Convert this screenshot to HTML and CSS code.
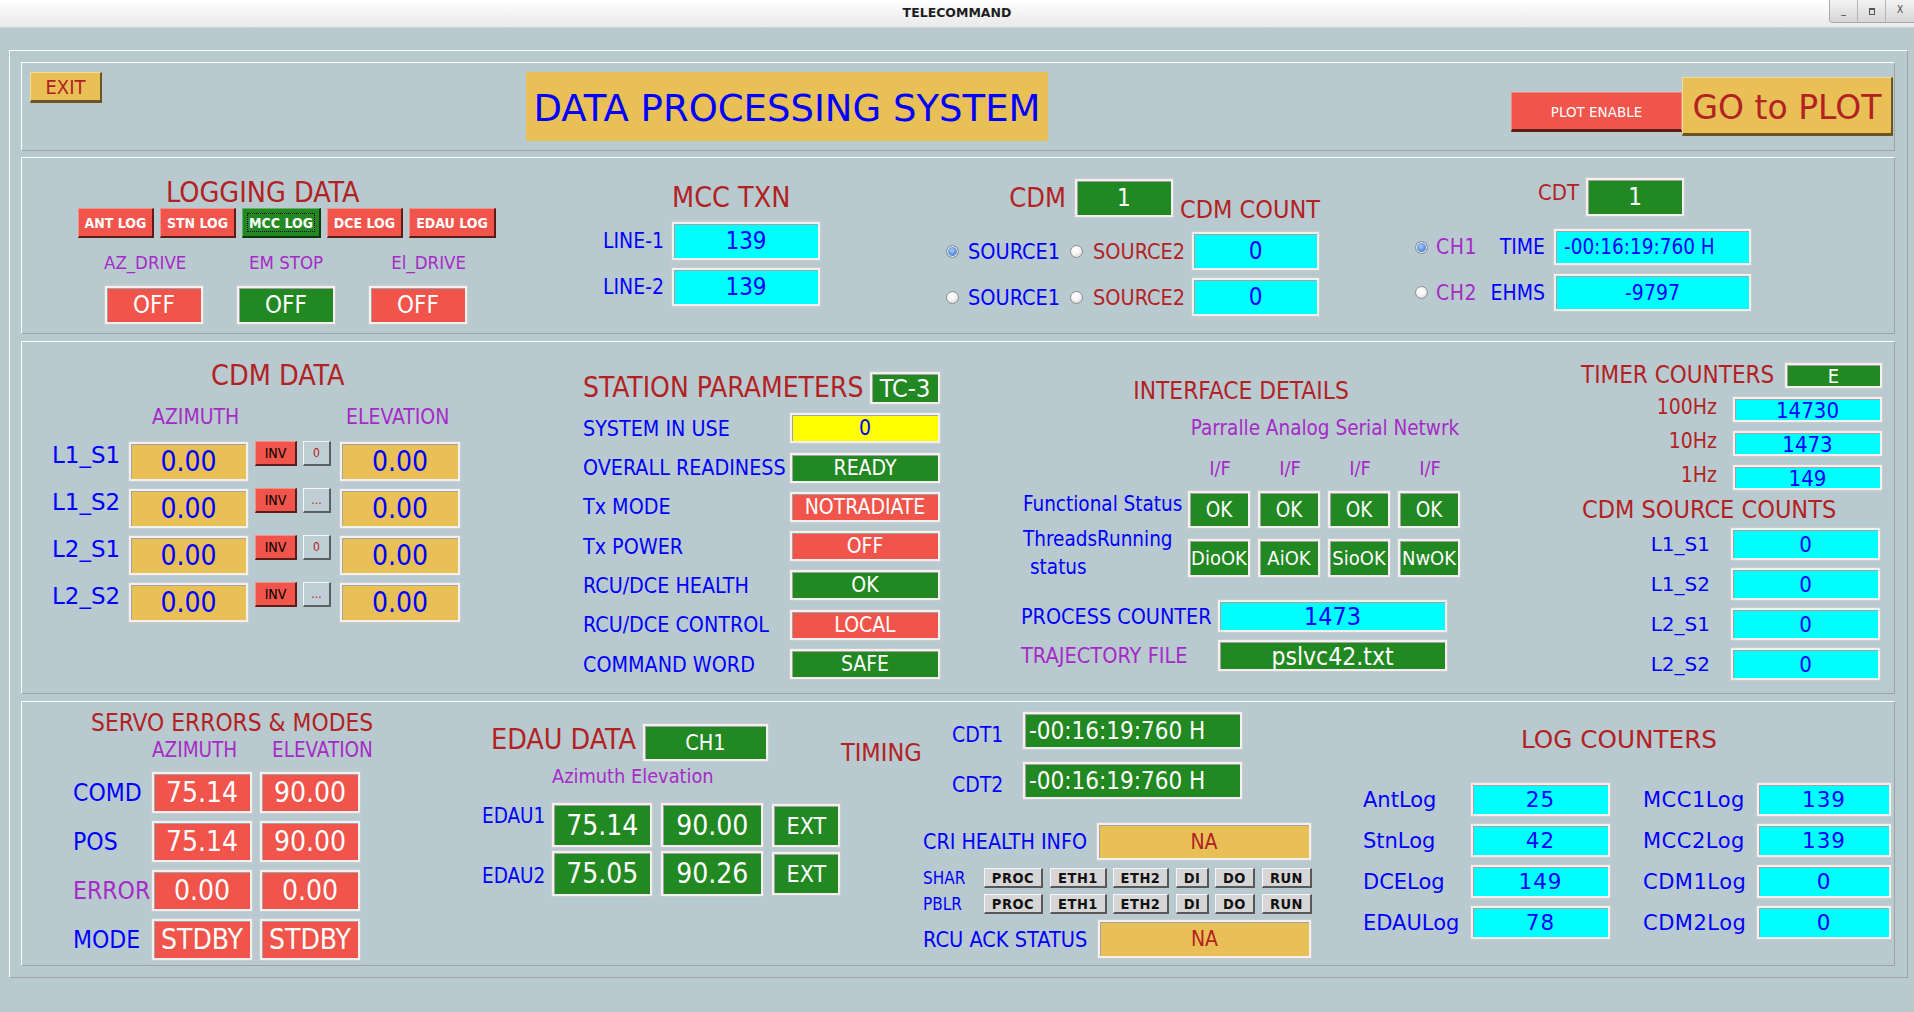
FILE: index.html
```html
<!DOCTYPE html>
<html>
<head>
<meta charset="utf-8">
<title>TELECOMMAND</title>
<link rel="stylesheet" href="styles.css">
</head>
<body>
<div class="titlebar">
  <div class="tb-title">TELECOMMAND</div>
  <div class="tb-btns"><span class="tb-b">_</span><span class="tb-b sq"><i></i></span><span class="tb-b">X</span></div>
</div>

<div class="outer">
  <!-- HEADER -->
  <div class="sec hdr">
    <div class="btn-exit">EXIT</div>
    <div class="dps">DATA PROCESSING SYSTEM</div>
    <div class="btn-plot">PLOT ENABLE</div>
    <div class="btn-go">GO to PLOT</div>
  </div>

  <!-- SECTION 2 -->
  <div class="sec s2">
    <div class="logA">
      <div class="ttl">LOGGING DATA</div>
      <div class="logbtns">
        <div class="lbtn w76">ANT LOG</div>
        <div class="lbtn w76">STN LOG</div>
        <div class="lbtn on w79"><span class="focus">MCC LOG</span></div>
        <div class="lbtn w76">DCE LOG</div>
        <div class="lbtn w87">EDAU LOG</div>
      </div>
      <div class="drv lbl">
        <span>AZ_DRIVE</span><span class="c">EM STOP</span><span class="r">El_DRIVE</span>
      </div>
      <div class="drv btns">
        <div class="fld rd">OFF</div><div class="fld gr">OFF</div><div class="fld rd">OFF</div>
      </div>
    </div>

    <div class="mcc">
      <div class="ttl">MCC TXN</div>
      <div class="lrow first"><span class="lab">LINE-1</span><div class="fld cy">139</div></div>
      <div class="lrow"><span class="lab">LINE-2</span><div class="fld cy">139</div></div>
    </div>

    <div class="cdm">
      <div class="cdmtop">
        <span class="lab1">CDM</span>
        <div class="fld gr">1</div>
        <span class="lab2">CDM COUNT</span>
      </div>
      <div class="srow first">
        <span class="radio sel"></span><span class="src1">SOURCE1</span>
        <span class="radio r2"></span><span class="src2">SOURCE2</span>
        <div class="fld cy">0</div>
      </div>
      <div class="srow">
        <span class="radio"></span><span class="src1">SOURCE1</span>
        <span class="radio r2"></span><span class="src2">SOURCE2</span>
        <div class="fld cy">0</div>
      </div>
    </div>

    <div class="cdt">
      <div class="cdttop"><span class="lab">CDT</span><div class="fld gr">1</div></div>
      <div class="crow first">
        <span class="radio sel"></span><span class="ch">CH1</span><span class="lb">TIME</span>
        <div class="fld cy left">-00:16:19:760 H</div>
      </div>
      <div class="crow second">
        <span class="radio"></span><span class="ch">CH2</span><span class="lb">EHMS</span>
        <div class="fld cy">-9797</div>
      </div>
    </div>
  </div>

  <!-- SECTION 3 -->
  <div class="sec s3">
    <div class="cdmd">
      <div class="ttl">CDM DATA</div>
      <div class="hdrr"><span class="hz">AZIMUTH</span><span>ELEVATION</span></div>
      <div class="drow first">
        <span class="lab">L1_S1</span><div class="fld gd az">0.00</div>
        <div class="inv">INV</div><div class="sm">0</div>
        <div class="fld gd el">0.00</div>
      </div>
      <div class="drow">
        <span class="lab">L1_S2</span><div class="fld gd az">0.00</div>
        <div class="inv">INV</div><div class="sm">...</div>
        <div class="fld gd el">0.00</div>
      </div>
      <div class="drow">
        <span class="lab">L2_S1</span><div class="fld gd az">0.00</div>
        <div class="inv">INV</div><div class="sm">0</div>
        <div class="fld gd el">0.00</div>
      </div>
      <div class="drow">
        <span class="lab">L2_S2</span><div class="fld gd az">0.00</div>
        <div class="inv">INV</div><div class="sm">...</div>
        <div class="fld gd el">0.00</div>
      </div>
    </div>

    <div class="stn">
      <div class="stntop"><span class="ttl">STATION PARAMETERS</span><div class="fld gr">TC-3</div></div>
      <div class="prow"><span class="lab">SYSTEM IN USE</span><div class="fld ye">0</div></div>
      <div class="prow"><span class="lab">OVERALL READINESS</span><div class="fld gr">READY</div></div>
      <div class="prow"><span class="lab">Tx MODE</span><div class="fld rd">NOTRADIATE</div></div>
      <div class="prow"><span class="lab">Tx POWER</span><div class="fld rd">OFF</div></div>
      <div class="prow"><span class="lab">RCU/DCE HEALTH</span><div class="fld gr">OK</div></div>
      <div class="prow"><span class="lab">RCU/DCE CONTROL</span><div class="fld rd">LOCAL</div></div>
      <div class="prow"><span class="lab">COMMAND WORD</span><div class="fld gr">SAFE</div></div>
    </div>

    <div class="ifd">
      <div class="ttl2">INTERFACE DETAILS</div>
      <div class="sub">Parralle Analog Serial Netwrk</div>
      <div class="ifrow iflbl"><span>I/F</span><span>I/F</span><span>I/F</span><span>I/F</span></div>
      <div class="okrow">
        <span class="lab">Functional Status</span>
        <div class="ifrow">
          <div class="fld gr">OK</div><div class="fld gr">OK</div><div class="fld gr">OK</div><div class="fld gr">OK</div>
        </div>
      </div>
      <div class="okrow r2">
        <span class="lab">ThreadsRunning<br><span class="ind">status</span></span>
        <div class="ifrow">
          <div class="fld gr">DioOK</div><div class="fld gr">AiOK</div><div class="fld gr">SioOK</div><div class="fld gr">NwOK</div>
        </div>
      </div>
      <div class="pcrow"><span class="lab">PROCESS COUNTER</span><div class="fld cy">1473</div></div>
      <div class="pcrow tr"><span class="lab">TRAJECTORY FILE</span><div class="fld gr">pslvc42.txt</div></div>
    </div>

    <div class="tmr">
      <div class="tmrtop"><span class="lab">TIMER COUNTERS</span><div class="fld gr">E</div></div>
      <div class="hzrow"><span class="lab">100Hz</span><div class="fld cy">14730</div></div>
      <div class="hzrow"><span class="lab">10Hz</span><div class="fld cy">1473</div></div>
      <div class="hzrow"><span class="lab">1Hz</span><div class="fld cy">149</div></div>
      <div class="csc">CDM SOURCE COUNTS</div>
      <div class="lsrow first"><span class="lab">L1_S1</span><div class="fld cy">0</div></div>
      <div class="lsrow"><span class="lab">L1_S2</span><div class="fld cy">0</div></div>
      <div class="lsrow"><span class="lab">L2_S1</span><div class="fld cy">0</div></div>
      <div class="lsrow"><span class="lab">L2_S2</span><div class="fld cy">0</div></div>
    </div>
  </div>

  <!-- SECTION 4 -->
  <div class="sec s4">
    <div class="srv">
      <div class="ttl3">SERVO ERRORS &amp; MODES</div>
      <div class="srvh"><span class="a">AZIMUTH</span><span>ELEVATION</span></div>
      <div class="svrow first"><span class="lab">COMD</span><div class="fld rd">75.14</div><div class="fld rd">90.00</div></div>
      <div class="svrow"><span class="lab">POS</span><div class="fld rd">75.14</div><div class="fld rd">90.00</div></div>
      <div class="svrow"><span class="lab p">ERROR</span><div class="fld rd">0.00</div><div class="fld rd">0.00</div></div>
      <div class="svrow"><span class="lab">MODE</span><div class="fld rd">STDBY</div><div class="fld rd">STDBY</div></div>
    </div>

    <div class="edau">
      <div class="edtop"><span class="lab">EDAU DATA</span><div class="fld gr">CH1</div></div>
      <div class="edsub">Azimuth Elevation</div>
      <div class="edrow"><span class="lab">EDAU1</span><div class="fld gr f1">75.14</div><div class="fld gr f2">90.00</div><div class="fld gr ext">EXT</div></div>
      <div class="edrow r2"><span class="lab">EDAU2</span><div class="fld gr f1">75.05</div><div class="fld gr f2">90.26</div><div class="fld gr ext">EXT</div></div>
    </div>

    <div class="tim">
      <div class="timtop">
        <span class="lab">TIMING</span>
        <div class="cdtcol">
          <div class="cdtrow"><span class="lab2">CDT1</span><div class="fld gr">-00:16:19:760 H</div></div>
          <div class="cdtrow"><span class="lab2">CDT2</span><div class="fld gr">-00:16:19:760 H</div></div>
        </div>
      </div>
      <div class="cri">
        <div class="crirow"><span class="lab">CRI HEALTH INFO</span><div class="fld gdr">NA</div></div>
        <div class="btnrow first">
          <span class="lab">SHAR</span>
          <div class="pb w59">PROC</div><div class="pb w57">ETH1</div><div class="pb w56">ETH2</div><div class="pb w33">DI</div><div class="pb w40">DO</div><div class="pb w50">RUN</div>
        </div>
        <div class="btnrow">
          <span class="lab">PBLR</span>
          <div class="pb w59">PROC</div><div class="pb w57">ETH1</div><div class="pb w56">ETH2</div><div class="pb w33">DI</div><div class="pb w40">DO</div><div class="pb w50">RUN</div>
        </div>
        <div class="crirow rcu"><span class="lab">RCU ACK STATUS</span><div class="fld gdr">NA</div></div>
      </div>
    </div>

    <div class="logc">
      <div class="ttl4">LOG COUNTERS</div>
      <div class="lcrow first"><span class="lab">AntLog</span><div class="fld cy fa">25</div><span class="lab b">MCC1Log</span><div class="fld cy fb">139</div></div>
      <div class="lcrow"><span class="lab">StnLog</span><div class="fld cy fa">42</div><span class="lab b">MCC2Log</span><div class="fld cy fb">139</div></div>
      <div class="lcrow"><span class="lab">DCELog</span><div class="fld cy fa">149</div><span class="lab b">CDM1Log</span><div class="fld cy fb">0</div></div>
      <div class="lcrow"><span class="lab">EDAULog</span><div class="fld cy fa">78</div><span class="lab b">CDM2Log</span><div class="fld cy fb">0</div></div>
    </div>
  </div>
</div>
</body>
</html>
```

FILE: styles.css
```css
* { box-sizing: border-box; margin: 0; padding: 0; }

html, body { width: 1914px; height: 1012px; }

body {
  background: #b9c9d0;
  overflow: hidden;
  font-family: "DejaVu Sans Condensed", "DejaVu Sans", sans-serif;
  font-stretch: condensed;
  color: #0000ff;
  white-space: nowrap;
}

/* ---------- title bar ---------- */
.titlebar {
  height: 28px;
  background: linear-gradient(#ffffff, #e9e9e9);
  border-bottom: 1px solid #d2d2d2;
  display: grid;
  grid-template-columns: 1fr auto 1fr;
  align-items: start;
}
.tb-title {
  grid-column: 2;
  font-family: "DejaVu Sans", sans-serif;
  font-stretch: normal;
  font-weight: bold;
  font-size: 12.5px;
  line-height: 25px;
  color: #1e1e1e;
}
.tb-btns {
  grid-column: 3;
  justify-self: end;
  display: flex;
  height: 23px;
  border-left: 1px solid #a9a9a9;
  border-bottom: 1px solid #a9a9a9;
  border-radius: 0 0 0 4px;
  overflow: hidden;
}
.tb-b {
  width: 28px;
  height: 22px;
  background: linear-gradient(#f3f3f3, #d6d6d6);
  border-right: 1px solid #b5b5b5;
  font-family: "DejaVu Sans", sans-serif;
  font-size: 10px;
  line-height: 20px;
  color: #444;
  text-align: center;
}
.tb-b:last-child { border-right: none; }
.tb-b.sq { display: flex; align-items: center; justify-content: center; }
.tb-b.sq i { display: block; width: 6px; height: 7px; border: 1px solid #555; border-top-width: 2px; }

/* ---------- frames ---------- */
.outer {
  margin: 22px 0 0 9px;
  width: 1899px;
  height: 928px;
  border: 1px solid;
  border-color: #ffffff #a2a2a2 #a2a2a2 #ffffff;
  padding: 11px 12px 11px 11px;
}
.sec {
  width: 1874px;
  border: 1px solid;
  border-color: #ffffff #a2a2a2 #a2a2a2 #ffffff;
  display: flex;
  align-items: flex-start;
}
.hdr { height: 89px; }
.s2 { height: 177px; margin-top: 6px; }
.s3 { height: 353px; margin-top: 7px; }
.s4 { height: 265px; margin-top: 7px; }

/* ---------- generic fields ---------- */
.fld {
  flex: none;
  display: flex;
  align-items: center;
  justify-content: center;
  border: 1px solid #cccccc;
  box-shadow: inset 0 0 0 2px #f1f1f1, inset 3px 3px 0 0 #a3a3a3;
  overflow: hidden;
  white-space: nowrap;
}
.cy { background: #00ffff; color: #0000ff; }
.gd { background: #e8c056; color: #0000ff; }
.gdr { background: #e8c056; color: #b22222; }
.gr { background: #228822; color: #ffffff; }
.rd { background: #f0544a; color: #ffffff; }
.ye { background: #ffff00; color: #0000ff; }

.ttl {
  font-size: 28.5px;
  line-height: 30px;
  color: #b22222;
  white-space: nowrap;
}

/* ---------- header ---------- */
.btn-exit {
  flex: none;
  margin: 9px 0 0 8px;
  width: 72px;
  height: 31px;
  background: #e8c056;
  border-style: solid;
  border-width: 1px 2px 3px 1px;
  border-color: #f4dc98 #6b5522 #6b5522 #f4dc98;
  color: #b22222;
  font-size: 20px;
  padding-top: 1px;
  display: flex;
  align-items: center;
  justify-content: center;
}
.dps {
  flex: none;
  margin: 9px 0 0 424px;
  width: 522px;
  height: 69px;
  padding-top: 4px;
  background: #e8c056;
  color: #0000ff;
  font-family: "DejaVu Sans", sans-serif;
  font-stretch: normal;
  font-size: 37px;
  display: flex;
  align-items: center;
  justify-content: center;
}
.btn-plot {
  flex: none;
  margin: 29px 0 0 463px;
  width: 171px;
  height: 40px;
  padding-top: 2px;
  background: #f0544a;
  border-style: solid;
  border-width: 1px 1px 3px 1px;
  border-color: #f58a82 #f58a82 #5e1c16 #f58a82;
  color: #ffffff;
  font-family: "DejaVu Sans", sans-serif;
  font-stretch: normal;
  font-size: 13.5px;
  display: flex;
  align-items: center;
  justify-content: center;
}
.btn-go {
  flex: none;
  margin-top: 14px;
  width: 211px;
  height: 59px;
  padding-top: 4px;
  background: #e8c056;
  border-style: solid;
  border-width: 1px 2px 3px 1px;
  border-color: #f4dc98 #6b5522 #6b5522 #f4dc98;
  color: #b22222;
  font-family: "DejaVu Sans", sans-serif;
  font-stretch: normal;
  font-size: 33px;
  display: flex;
  align-items: center;
  justify-content: center;
}

/* ---------- logging data ---------- */
.logA { flex: none; margin: 20px 0 0 56px; width: 418px; }
.logA .ttl { padding-left: 88px; }
.logbtns { display: flex; gap: 6px; height: 30px; }
.lbtn {
  flex: none;
  height: 30px;
  display: flex;
  align-items: center;
  justify-content: center;
  background: #f0544a;
  color: #ffffff;
  font-weight: bold;
  font-size: 14px;
  border-style: solid;
  border-width: 1px 2px 2px 1px;
  border-color: #f59088 #5c1d18 #5c1d18 #f59088;
}
.lbtn.on { background: #228822; border-color: #5fb35f #0e360e #0e360e #5fb35f; }
.focus {
  display: flex;
  align-items: center;
  justify-content: center;
  width: calc(100% - 8px);
  height: calc(100% - 8px);
  border: 1px dotted #000000;
}
.w76 { width: 76px; }
.w79 { width: 79px; }
.w87 { width: 87px; }

.drv { display: grid; grid-template-columns: repeat(3, 100px); column-gap: 32px; margin-left: 26px; }
.drv.lbl { margin-top: 14px; font-size: 18.5px; line-height: 22px; color: #a52bc6; }
.drv.lbl .c { text-align: center; }
.drv.lbl .r { text-align: right; padding-right: 2px; }
.drv.btns { margin-top: 11px; }
.drv .fld { height: 40px; font-size: 24px; }

/* ---------- MCC TXN ---------- */
.mcc { flex: none; margin: 25px 0 0 100px; width: 225px; }
.mcc .ttl { padding-left: 76px; }
.lrow { display: flex; align-items: center; margin-top: 6px; }
.lrow.first { margin-top: 8px; }
.lrow .lab { width: 68px; margin-right: 7px; text-align: right; font-size: 21px; color: #0000ff; }
.mcc .fld { width: 150px; height: 40px; font-size: 24px; }

/* ---------- CDM ---------- */
.cdm { flex: none; margin: 20px 0 0 125px; width: 374px; }
.cdmtop { display: flex; justify-content: flex-end; align-items: center; height: 40px; }
.cdmtop .lab1 { font-size: 27px; line-height: 30px; color: #b22222; margin-right: 8px; }
.cdmtop .fld { width: 100px; height: 40px; font-size: 24px; }
.cdmtop .lab2 { align-self: flex-end; margin: 0 0 -4px 6px; font-size: 25px; line-height: 25px; color: #b22222; }

.radio {
  flex: none;
  display: block;
  width: 13px;
  height: 13px;
  border-radius: 50%;
  border: 1px solid #8e8e8e;
  background: radial-gradient(circle at 40% 35%, #ffffff 0, #f4f4f4 45%, #cbcbcb 100%);
}
.radio.sel {
  background: radial-gradient(circle at 45% 40%, #a8cbf4 0, #5a8fdc 50%, #3a68b4 100%);
  box-shadow: inset 0 0 0 1px #e9eef5;
}
.srow { display: flex; align-items: center; height: 40px; margin-top: 6px; }
.srow.first { margin-top: 13px; }
.srow .src1 { width: 91px; margin-left: 9px; font-size: 21.5px; color: #0000ff; }
.srow .r2 { margin-left: 11px; }
.srow .src2 { width: 91px; margin-left: 10px; font-size: 21.5px; color: #b22222; }
.srow .fld { margin-left: auto; width: 129px; height: 40px; font-size: 24px; }

/* ---------- CDT ---------- */
.cdt { flex: none; margin: 19px 0 0 95px; width: 337px; }
.cdttop { display: flex; margin-left: 123px; height: 40px; }
.cdttop .lab { margin: 5px 6px 0 0; font-size: 22px; line-height: 22px; color: #b22222; }
.cdttop .fld { width: 100px; height: 40px; font-size: 24px; }
.crow { display: flex; align-items: center; height: 38px; margin-top: 7px; }
.crow.first { margin-top: 11px; }
.crow.second { height: 39px; }
.crow .ch { width: 54px; margin-left: 8px; font-size: 21px; letter-spacing: 0.5px; color: #a52bc6; }
.crow .lb { width: 55px; text-align: right; font-size: 21px; color: #0000ff; }
.crow .fld { margin-left: 8px; width: 199px; height: 100%; font-size: 21px; }
.crow .fld.left { justify-content: flex-start; padding-left: 10px; font-size: 20.5px; }

/* ---------- CDM DATA ---------- */
.cdmd { flex: none; margin: 19px 0 0 30px; width: 409px; }
.cdmd .ttl { padding-left: 159px; }
.hdrr { display: flex; margin-top: 14px; padding-left: 100px; font-size: 21px; line-height: 24px; color: #a52bc6; }
.hdrr .hz { width: 194px; }
.drow { display: flex; align-items: flex-start; height: 41px; margin-top: 6px; }
.drow.first { margin-top: 12px; }
.drow .lab {
  width: 68px;
  margin-top: 2px;
  font-family: "DejaVu Sans", sans-serif;
  font-stretch: normal;
  font-size: 23px;
  line-height: 24px;
  color: #0000ff;
}
.drow .fld { height: 41px; font-size: 28px; }
.drow .az { margin-left: 8px; width: 121px; }
.drow .el { margin-left: 8px; width: 122px; }
.inv {
  flex: none;
  margin-left: 6px;
  width: 42px;
  height: 25px;
  background: #f0544a;
  color: #000000;
  font-size: 14px;
  display: flex;
  align-items: center;
  justify-content: center;
  border-style: solid;
  border-width: 1px 2px 2px 1px;
  border-color: #f59088 #5c1d18 #5c1d18 #f59088;
}
.sm {
  flex: none;
  margin-left: 6px;
  width: 28px;
  height: 25px;
  background: #bfced4;
  color: #b22222;
  font-size: 12px;
  display: flex;
  align-items: center;
  justify-content: center;
  border-style: solid;
  border-width: 1px 2px 2px 1px;
  border-color: #f2f6f8 #5a5f62 #5a5f62 #f2f6f8;
}

/* ---------- STATION PARAMETERS ---------- */
.stn { flex: none; margin: 29px 0 0 122px; width: 358px; }
.stntop { display: flex; align-items: center; height: 34px; }
.stntop .ttl { font-size: 28px; }
.stntop .fld { margin-left: auto; width: 72px; height: 34px; font-size: 25px; }
.prow { display: flex; align-items: center; height: 32px; margin-top: 7.3px; }
.prow .lab { flex: 1; font-size: 21.3px; color: #0000ff; }
.prow .fld { width: 152px; height: 32px; font-size: 21px; }

/* ---------- INTERFACE DETAILS ---------- */
.ifd { flex: none; margin: 35px 0 0 80px; width: 440px; }
.ttl2 { text-align: center; font-size: 24.3px; line-height: 28px; color: #b22222; }
.sub { margin: 11px 0 0 167px; width: 274px; text-align: center; font-size: 20.5px; line-height: 24px; color: #a52bc6; }
.ifrow { display: grid; grid-template-columns: repeat(4, 64px); column-gap: 6px; }
.iflbl { margin: 16px 0 0 167px; font-size: 20px; line-height: 24px; color: #a52bc6; text-align: center; }
.okrow { display: flex; margin-top: 10px; }
.okrow .lab { width: 167px; padding-left: 2px; margin-top: 2px; font-size: 20.5px; line-height: 24px; color: #0000ff; }
.okrow .fld { height: 39px; font-size: 20.5px; }
.okrow.r2 { margin-top: 9px; }
.okrow.r2 .lab { margin-top: -13px; line-height: 28px; }
.okrow.r2 .fld { height: 40px; font-size: 20px; }
.ind { padding-left: 7px; }
.pcrow { display: flex; align-items: center; height: 34px; margin-top: 18px; }
.pcrow .lab { width: 196px; font-size: 21.4px; color: #0000ff; }
.pcrow .fld { width: 231px; height: 34px; font-size: 25px; }
.pcrow.tr { height: 33px; margin-top: 6px; }
.pcrow.tr .lab { color: #a52bc6; font-size: 21.6px; }
.pcrow.tr .fld { height: 33px; font-size: 24.5px; align-items: flex-end; line-height: 29px; }

/* ---------- TIMER COUNTERS ---------- */
.tmr { flex: none; margin: 20px 0 0 120px; width: 302px; }
.tmrtop { display: flex; align-items: center; height: 27px; }
.tmrtop .lab { font-size: 24px; line-height: 27px; color: #b22222; }
.tmrtop .fld { margin-left: auto; width: 99px; height: 27px; font-size: 20px; }
.hzrow { display: flex; height: 27px; margin-top: 7px; }
.hzrow .lab { width: 136px; text-align: right; font-size: 21px; line-height: 22px; color: #b22222; }
.hzrow .fld { margin-left: 15px; width: 151px; height: 27px; font-size: 22px; padding-top: 2px; }
.csc { margin-top: 6px; padding-left: 1px; font-size: 25px; line-height: 26px; color: #b22222; }
.lsrow { display: flex; align-items: center; height: 34px; margin-top: 6px; }
.lsrow.first { margin-top: 4px; }
.lsrow .lab {
  width: 129px;
  text-align: right;
  font-family: "DejaVu Sans", sans-serif;
  font-stretch: normal;
  font-size: 20px;
  color: #0000ff;
}
.lsrow .fld { margin-left: 20px; width: 151px; height: 34px; font-size: 22px; }

/* ---------- SERVO ---------- */
.srv { flex: none; margin: 7px 0 0 51px; width: 300px; }
.ttl3 { padding-left: 18px; font-size: 24.3px; line-height: 28px; color: #b22222; }
.srvh { display: flex; margin-top: 1px; font-size: 20.5px; line-height: 24px; color: #a52bc6; }
.srvh .a { margin-left: 79px; width: 120px; }
.svrow { display: flex; align-items: center; height: 43px; margin-top: 6px; }
.svrow.first { margin-top: 9px; }
.svrow .lab { width: 78px; font-size: 24.5px; color: #0000ff; }
.svrow .lab.p { color: #a52bc6; }
.svrow .fld { width: 102px; height: 43px; font-size: 28px; }
.svrow .fld + .fld { margin-left: 6px; }

/* ---------- EDAU ---------- */
.edau { flex: none; margin: 21px 0 0 109px; width: 358px; }
.edtop { display: flex; align-items: flex-start; height: 39px; }
.edtop .lab { margin-top: 2px; padding-left: 9px; font-size: 28.4px; line-height: 30px; color: #b22222; }
.edtop .fld { margin-left: 6px; width: 127px; height: 39px; font-size: 21.5px; }
.edsub { margin-top: 4px; padding-left: 70px; font-size: 19.8px; line-height: 22px; color: #a52bc6; }
.edrow { display: flex; align-items: flex-start; height: 46px; margin-top: 14px; }
.edrow.r2 { height: 47px; margin-top: 2px; }
.edrow .lab { width: 64px; margin-top: 2px; font-size: 20.5px; line-height: 24px; color: #0000ff; }
.edrow.r2 .lab { margin-top: 14px; }
.edrow .f1 { margin-left: 6px; width: 102px; height: 100%; font-size: 28px; }
.edrow .f2 { margin-left: 7px; width: 104px; height: 100%; font-size: 28px; }
.edrow .ext { margin: 1px 0 0 7px; width: 70px; height: 45px; font-size: 23px; }

/* ---------- TIMING ---------- */
.tim { flex: none; margin: 9px 0 0 1px; width: 471px; }
.timtop { display: flex; }
.timtop .lab { width: 80px; margin-top: 27.5px; font-size: 25px; line-height: 28px; color: #b22222; }
.cdtcol { margin-left: 31px; }
.cdtrow { display: flex; height: 39px; }
.cdtrow + .cdtrow { margin-top: 11px; }
.cdtrow .lab2 { width: 51px; margin-top: 12px; font-size: 21px; line-height: 24px; color: #0000ff; }
.cdtrow .fld { margin-left: 19px; width: 221px; height: 39px; font-size: 24px; justify-content: flex-start; padding-left: 6px; }
.cri { margin: 22px 0 0 82px; }
.crirow { display: flex; align-items: center; }
.crirow .lab { width: 173px; font-size: 21.3px; color: #0000ff; }
.crirow .fld { width: 216px; height: 39px; font-size: 21px; }
.crirow.rcu { margin-top: 5px; }
.crirow.rcu .lab { width: 174px; font-size: 21.6px; }
.crirow.rcu .fld { width: 215px; height: 40px; }
.btnrow { display: flex; align-items: center; height: 20px; margin-top: 6px; }
.btnrow.first { margin-top: 7px; }
.btnrow .lab { width: 61px; font-size: 17px; color: #0000ff; }
.pb {
  flex: none;
  height: 20px;
  background: #d6d6d6;
  color: #111111;
  font-weight: bold;
  font-size: 14.5px;
  letter-spacing: 0.5px;
  display: flex;
  align-items: center;
  justify-content: center;
  border-style: solid;
  border-width: 1px 2px 2px 1px;
  border-color: #f6f6f6 #585858 #585858 #f6f6f6;
}
.pb.w57, .pb.w33, .pb.w50 { margin-left: 7px; }
.pb.w56, .pb.w40 { margin-left: 6px; }
.w59 { width: 59px; }
.w57 { width: 57px; }
.w56 { width: 56px; }
.w33 { width: 33px; }
.w40 { width: 40px; }
.w50 { width: 50px; }

/* ---------- LOG COUNTERS ---------- */
.logc {
  flex: none;
  margin: 23.5px 0 0 51px;
  width: 530px;
  font-family: "DejaVu Sans", sans-serif;
  font-stretch: normal;
}
.ttl4 { padding-left: 158px; font-size: 24.7px; line-height: 28px; color: #b22222; }
.lcrow { display: flex; align-items: center; height: 35px; margin-top: 6px; }
.lcrow.first { margin-top: 28.5px; }
.lcrow .lab { width: 107px; font-size: 21px; color: #0000ff; }
.lcrow .lab.b { margin-left: 32px; width: 113px; letter-spacing: 0.5px; }
.lcrow .fld { height: 35px; font-size: 21.5px; letter-spacing: 1px; }
.lcrow .fa { width: 141px; }
.lcrow .fb { width: 136px; }
```
